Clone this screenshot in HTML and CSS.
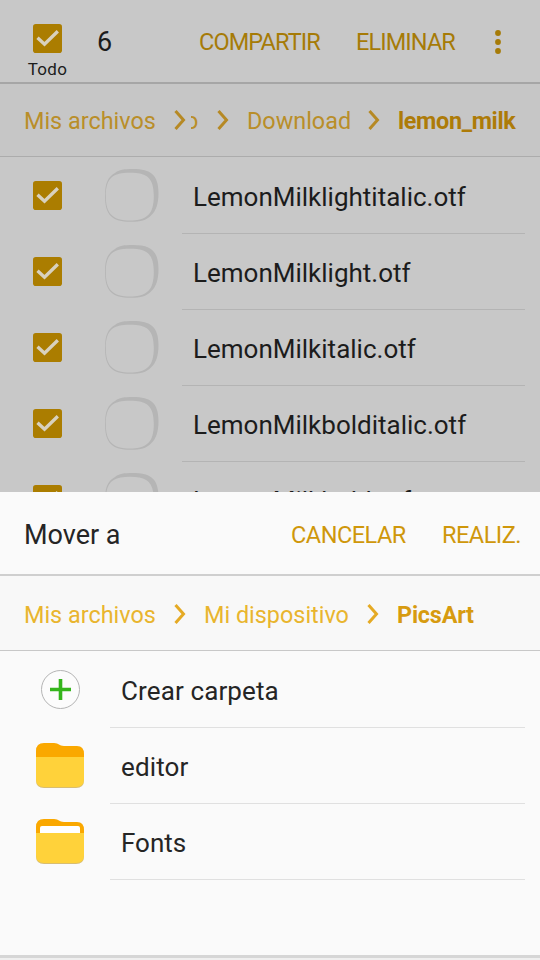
FILE: index.html
```
<!DOCTYPE html>
<html lang="es">
<head>
<meta charset="utf-8">
<title>Mis archivos</title>
<link rel="stylesheet" href="styles.css">
</head>
<body>
<svg width="0" height="0" class="defs">
  <symbol id="check" viewBox="0 0 29 29"><rect width="29" height="29" rx="2.800" fill="#ab7d00"/><path d="M4.500 13.700 11.500 20.300 24.800 7.200" fill="none" stroke="#d8d1be" stroke-width="3.300"/></symbol>
  <symbol id="chevron" viewBox="0 0 12 20"><path d="M1.500 1 9.500 10 1.500 19" fill="none" stroke="currentColor" stroke-width="3"/></symbol>
  <symbol id="file" viewBox="0 0 56 56"><path fill="#b5b5b5" fill-rule="evenodd" d="M11 5C15 1.500 20 1 29 1C47 1 54.500 7 54.500 25C54.500 36 52 43 47 47.500C42 52.500 37 53.800 27 53.800C8 53.800 1 47 1 28C1 15 4 9 11 5ZM26 4.800C9 4.800 1.800 10 1.800 28C1.800 46 9 52.500 26 52.500C43 52.500 49.800 46 49.800 28C49.800 10 43 4.800 26 4.800Z"/></symbol>
</svg>
<div class="screen">
  <section class="files">
    <header class="bar">
      <div class="all"><svg class="check"><use href="#check"/></svg><span>Todo</span></div>
      <span class="count">6</span>
      <span class="action share">COMPARTIR</span>
      <span class="action delete">ELIMINAR</span>
      <svg class="more" viewBox="0 0 6 24"><circle cx="3" cy="3" r="2.900"/><circle cx="3" cy="12" r="2.900"/><circle cx="3" cy="21" r="2.900"/></svg>
    </header>
    <nav class="crumbs">
      <span class="root">Mis archivos</span><svg class="chev"><use href="#chevron"/></svg>
      <span class="clip"><span>o</span></span><svg class="chev"><use href="#chevron"/></svg>
      <span class="download">Download</span><svg class="chev"><use href="#chevron"/></svg>
      <b class="lemon">lemon_milk</b>
    </nav>
    <ul class="list">
      <li><svg class="check"><use href="#check"/></svg><svg class="file"><use href="#file"/></svg><span class="name">LemonMilklightitalic.otf</span></li>
      <li><svg class="check"><use href="#check"/></svg><svg class="file"><use href="#file"/></svg><span class="name">LemonMilklight.otf</span></li>
      <li><svg class="check"><use href="#check"/></svg><svg class="file"><use href="#file"/></svg><span class="name">LemonMilkitalic.otf</span></li>
      <li><svg class="check"><use href="#check"/></svg><svg class="file"><use href="#file"/></svg><span class="name">LemonMilkbolditalic.otf</span></li>
      <li><svg class="check"><use href="#check"/></svg><svg class="file"><use href="#file"/></svg><span class="name">LemonMilkbold.otf</span></li>
    </ul>
  </section>
  <section class="sheet">
    <header class="bar">
      <h1>Mover a</h1>
      <span class="action cancel">CANCELAR</span>
      <span class="action done">REALIZ.</span>
    </header>
    <nav class="crumbs">
      <span class="root">Mis archivos</span><svg class="chev"><use href="#chevron"/></svg>
      <span class="device">Mi dispositivo</span><svg class="chev"><use href="#chevron"/></svg>
      <b class="picsart">PicsArt</b>
    </nav>
    <ul class="list">
      <li><svg class="icon" viewBox="0 0 48 48"><circle cx="24.500" cy="23.500" r="19" fill="#fcfcfc" stroke="#b5b5b5"/><path d="M24.500 13v21M14 23.500h21" stroke="#35b51c" stroke-width="3.600"/></svg><span class="name create">Crear carpeta</span></li>
      <li><svg class="icon" viewBox="0 0 48 48"><path fill="#d8bd70" d="M0 30h48v8q0 8-8 8H8q-8 0-8-8z"/><path fill="#faa800" d="M0 9Q0 1 8 1H18C23 1 23 4 28 4H41Q48 4 48 12V30H0z"/><path fill="#ffd23a" d="M0 15h48v22q0 8-8 8H8q-8 0-8-8z"/></svg><span class="name create">editor</span></li>
      <li><svg class="icon" viewBox="0 0 48 48"><path fill="#d8bd70" d="M0 30h48v8q0 8-8 8H8q-8 0-8-8z"/><path fill="#faa800" d="M0 9Q0 1 8 1H18C23 1 23 4 28 4H41Q48 4 48 12V30H0z"/><path fill="#fff" d="M4 16V10q0-2 2-2H42q2 0 2 2v6z"/><path fill="#ffd23a" d="M0 15h48v22q0 8-8 8H8q-8 0-8-8z"/></svg><span class="name">Fonts</span></li>
    </ul>
    <footer class="edge"></footer>
  </section>
</div>
</body>
</html>
```
FILE: styles.css
```
* { box-sizing: border-box; }
body { margin: 0; font-family: Roboto, sans-serif; color: #252525; }
.defs { display: block; width: 0; height: 0; }
svg { display: block; flex: none; }
.screen { width: 540px; height: 960px; overflow: hidden; display: flex; flex-direction: column; }
.files { height: 492px; flex: none; overflow: hidden; background: #c8c8c8; color: #1c1c1c; }
.sheet { height: 468px; flex: none; display: flex; flex-direction: column; background: #fafafa; }
.bar { height: 84px; padding-top: 2px; display: flex; align-items: center; border-bottom: 2px solid #a6a6a6; white-space: nowrap; }
.sheet .bar { padding-top: 4px; border-color: #cfcfcf; }
.all { width: 95px; height: 82px; padding-top: 23px; display: flex; flex-direction: column; align-items: center; font-size: 17px; line-height: 20px; letter-spacing: .3px; }
.all .check { margin-bottom: 6px; }
.check { width: 29px; height: 29px; }
.count { width: 104px; padding-left: 2px; font-size: 27px; }
.action { flex: none; font-size: 23.5px; color: #a67b07; letter-spacing: -.9px; }
.share { width: 157px; }
.delete { width: 139px; }
.more { width: 6px; height: 24px; fill: #a67b07; }
.sheet .action { color: #cf970a; letter-spacing: -.5px; }
.sheet h1 { margin: 0; width: 291px; padding-left: 24px; font-size: 27px; font-weight: 400; }
.cancel { width: 151px; }
.crumbs { height: 73px; padding: 2px 0 0 24px; display: flex; align-items: center; border-bottom: 1px solid #acacac; background: #c6c6c6; color: #b98e29; font-size: 23.4px; white-space: nowrap; }
.sheet .crumbs { height: 75px; padding-top: 4px; border-color: #c8c8c8; background: #f8f8f8; color: #e9b52e; }
.crumbs .chev { width: 12px; height: 20px; margin-top: -2px; color: #b68924; }
.sheet .crumbs .chev { color: #e5aa24; }
.crumbs b { font-weight: 700; color: #ad7b08; }
.sheet .crumbs b { color: #d79b10; }
.root { width: 150px; }
.clip { width: 13px; margin: 0 13px 0 5px; overflow: hidden; display: flex; justify-content: flex-start; }
.clip span { margin-left: -6px; }
.download { width: 121px; margin-left: 18px; }
.lemon { margin-left: 18px; letter-spacing: -.35px; }
.device { width: 163px; margin-left: 18px; }
.picsart { margin-left: 18px; letter-spacing: -.2px; }
.list { list-style: none; margin: 0; padding: 1px 0 0; }
.list li { height: 76px; display: flex; align-items: center; }
.files .list .check { margin: 0 0 2px 33px; }
.file { width: 56px; height: 56px; margin: 0 22px 1px 42px; }
.name { flex: none; height: 76px; width: 343px; padding-left: 11px; line-height: 78px; font-size: 26px; border-bottom: 1px solid #b4b4b4; white-space: nowrap; }
.sheet .name { width: 415px; padding-left: 11px; border-color: #e0e0e0; }
.create { letter-spacing: .12px; }
.icon { width: 48px; height: 48px; margin: 0 26px 0 36px; }
.edge { margin-top: auto; height: 5px; border-top: 3px solid #d6d6d6; background: #efefef; }
```
